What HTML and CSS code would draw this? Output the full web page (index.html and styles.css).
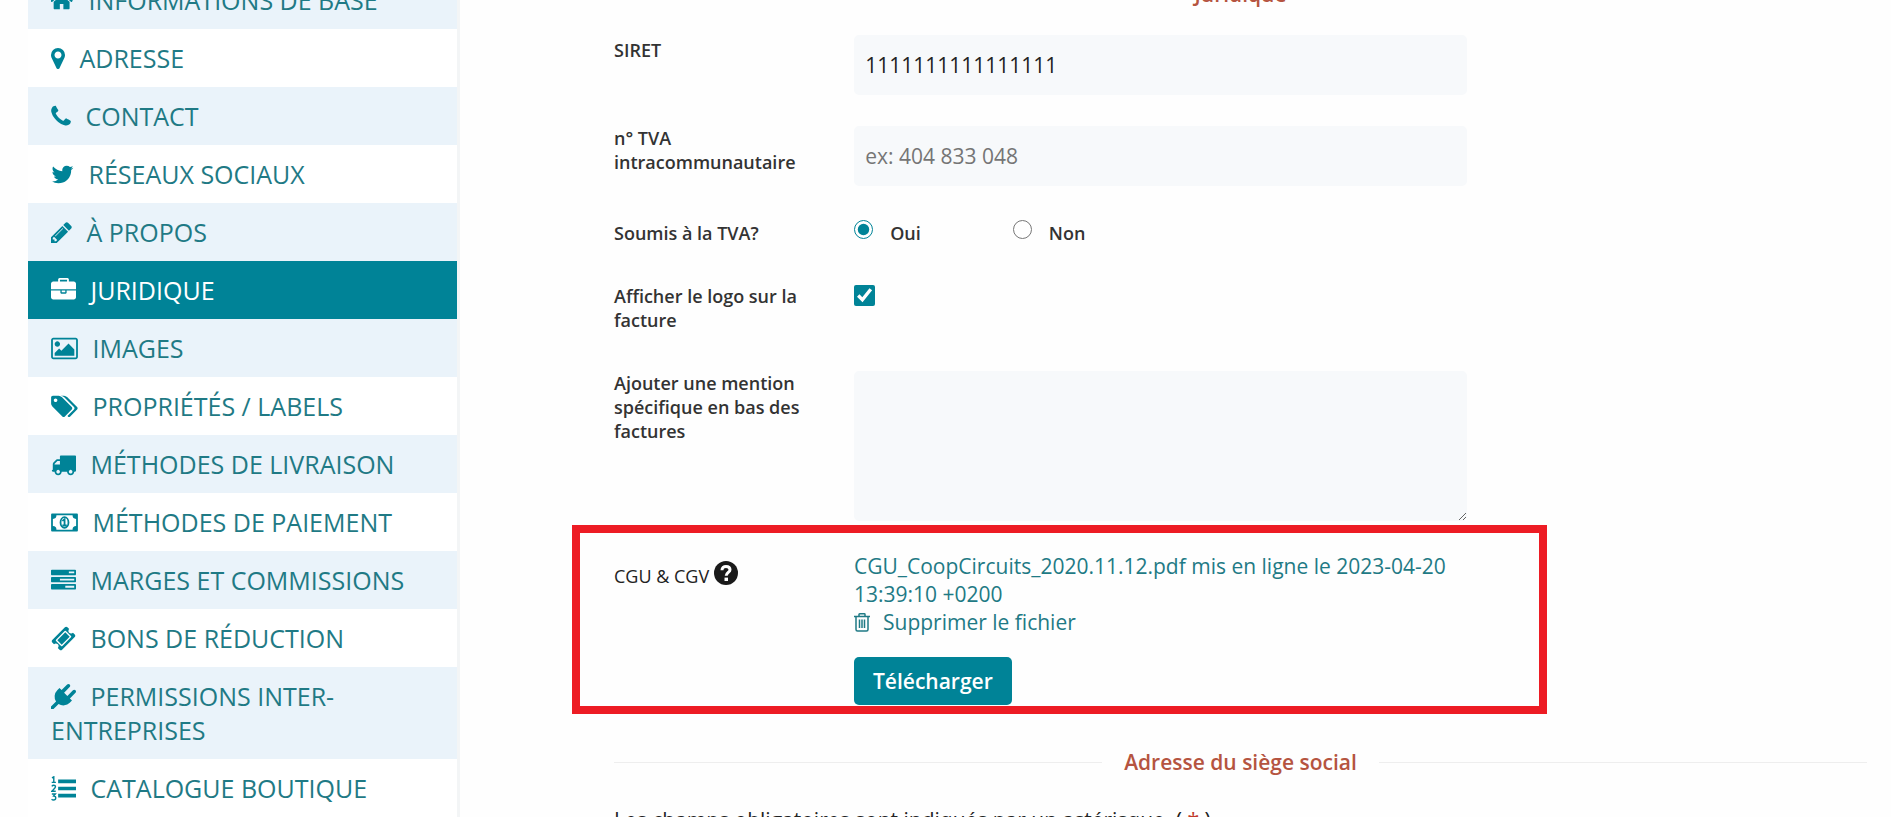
FILE: index.html
```html
<!DOCTYPE html>
<html lang="fr">
<head>
<meta charset="utf-8">
<title>Juridique</title>
<link rel="stylesheet" href="styles.css">
</head>
<body>
<div class="page">
  <nav class="side-menu" aria-label="Réglages">
    <a class="menu-item" href="#"><svg class="icon icon-l" viewBox="64 0 1664 1792"><path d="M1408 992v480q0 26-19 45t-45 19h-384v-384h-256v384h-384q-26 0-45-19t-19-45v-480q0-1 .5-3t.5-3l575-474 575 474q1 2 1 6zm223-69l-62 74q-8 9-21 11h-3q-13 0-21-7l-692-577-692 577q-12 8-24 7-13-2-21-11l-62-74q-8-10-7-23.5t11-21.5l719-599q32-26 76-26t76 26l244 204v-195q0-14 9-23t23-9h192q14 0 23 9t9 23v408l219 182q10 8 11 21.5t-7 23.5z"/></svg> INFORMATIONS DE BASE</a>
    <a class="menu-item" href="#"><svg class="icon icon-xs" viewBox="384 0 1024 1792"><path d="M1152 640q0-106-75-181t-181-75-181 75-75 181 75 181 181 75 181-75 75-181zm256 0q0 109-33 179l-364 774q-16 33-47.5 52t-67.5 19-67.5-19-46.5-52l-365-774q-33-70-33-179 0-212 150-362t362-150 362 150 150 362z"/></svg> ADRESSE</a>
    <a class="menu-item" href="#"><svg class="icon icon-s" viewBox="192 0 1408 1792"><path d="M1600 1240q0 27-10 70.5t-21 68.5q-21 50-122 106-94 51-186 51-27 0-53-3.5t-57.5-12.5-47-14.5-55.5-20.5-49-18q-98-35-175-83-127-79-264-216t-216-264q-48-77-83-175-3-9-18-49t-20.5-55.5-14.5-47-12.5-57.5-3.5-53q0-92 51-186 56-101 106-122 25-11 68.5-21t70.5-10q14 0 21 3 18 6 53 76 11 19 30 54t35 63.5 31 53.5q3 4 17.5 25t21.5 35.5 7 28.5q0 20-28.5 50t-62 55-62 53-28.5 46q0 9 5 22.5t8.5 20.5 14 24 11.5 19q76 137 174 235t235 174q2 1 19 11.5t24 14 20.5 8.5 22.5 5q18 0 46-28.5t53-62 55-62 50-28.5q14 0 28.5 7t35.5 21.5 25 17.5q25 15 53.5 31t63.5 35 54 30q70 35 76 53 3 7 3 21z"/></svg> CONTACT</a>
    <a class="menu-item" href="#"><svg class="icon icon-l" viewBox="64 0 1664 1792"><path d="M1684 408q-67 98-162 167 1 14 1 42 0 130-38 259.5t-115.5 248.5-184.5 210.5-258 146-323 54.5q-271 0-496-145 35 4 78 4 225 0 401-138-105-2-188-64.5t-114-159.5q33 5 61 5 43 0 85-11-112-23-185.5-111.5t-73.5-205.5v-4q68 38 146 41-66-44-105-115t-39-154q0-88 44-163 121 149 294.5 238.5t371.5 99.5q-8-38-8-74 0-134 94.5-228.5t228.5-94.5q140 0 236 102 109-21 205-78-37 115-142 178 93-10 186-50z"/></svg> RÉSEAUX SOCIAUX</a>
    <a class="menu-item" href="#"><svg class="icon icon-m" viewBox="128 0 1536 1792"><path d="M491 1536l91-91-235-235-91 91v107h128v128h107zm523-928q0-22-22-22-10 0-17 7l-542 542q-7 7-7 17 0 22 22 22 10 0 17-7l542-542q7-7 7-17zm-54-192l416 416-832 832h-416v-416zm683 96q0 53-37 90l-166 166-416-416 166-165q36-38 90-38 53 0 91 38l235 234q37 39 37 91z"/></svg> À PROPOS</a>
    <a class="menu-item menu-item-active" href="#" aria-current="page"><svg class="icon icon-xl" viewBox="0 0 1792 1792"><path d="M640 256h512v-128h-512v128zm1152 640v480q0 66-47 113t-113 47h-1472q-66 0-113-47t-47-113v-480h672v160q0 26 19 45t45 19h320q26 0 45-19t19-45v-160h672zm-768 0v128h-256v-128h256zm768-480v384h-1792v-384q0-66 47-113t113-47h352v-160q0-40 28-68t68-28h576q40 0 68 28t28 68v160h352q66 0 113 47t47 113z"/></svg> JURIDIQUE</a>
    <a class="menu-item" href="#"><svg class="icon icon-xxl" viewBox="-64 0 1920 1792"><path d="M576 576q0 80-56 136t-136 56-136-56-56-136 56-136 136-56 136 56 56 136zm1024 384v448h-1408v-192l320-320 160 160 512-512zm96-704h-1600q-13 0-22.5 9.5t-9.5 22.5v1216q0 13 9.5 22.5t22.5 9.5h1600q13 0 22.5-9.5t9.5-22.5v-1216q0-13-9.5-22.5t-22.5-9.5zm160 32v1216q0 66-47 113t-113 47h-1600q-66 0-113-47t-47-113v-1216q0-66 47-113t113-47h1600q66 0 113 47t47 113z"/></svg> IMAGES</a>
    <a class="menu-item" href="#"><svg class="icon icon-xxl" viewBox="-64 0 1920 1792"><path d="M384 448q0-53-37.5-90.5t-90.5-37.5-90.5 37.5-37.5 90.5 37.5 90.5 90.5 37.5 90.5-37.5 37.5-90.5zm1067 576q0 53-37 90l-491 492q-39 37-91 37-53 0-90-37l-715-716q-38-37-64.5-101t-26.5-117v-416q0-52 38-90t90-38h416q53 0 117 26.5t102 64.5l715 714q37 39 37 91zm384 0q0 53-37 90l-491 492q-39 37-91 37-36 0-59-14t-53-45l470-470q37-37 37-90 0-52-37-91l-715-714q-38-38-102-64.5t-117-26.5h224q53 0 117 26.5t102 64.5l715 714q37 39 37 91z"/></svg> PROPRIÉTÉS / LABELS</a>
    <a class="menu-item" href="#"><svg class="icon icon-xl" viewBox="0 0 1792 1792"><path d="M640 1408q0-52-38-90t-90-38-90 38-38 90 38 90 90 38 90-38 38-90zm-384-512h384v-256h-158q-13 0-22 9l-195 195q-9 9-9 22v30zm1280 512q0-52-38-90t-90-38-90 38-38 90 38 90 90 38 90-38 38-90zm256-1088v1024q0 15-4 26.5t-13.5 18.5-16.5 11.5-23.5 6-22.5 2-25.5 0-22.5-.5q0 106-75 181t-181 75-181-75-75-181h-384q0 106-75 181t-181 75-181-75-75-181h-64q-3 0-22.5.5t-25.5 0-22.5-2-23.5-6-16.5-11.5-13.5-18.5-4-26.5q0-26 19-45t45-19v-320q0-8-.5-35t0-38 2.5-34.5 6.5-37 14-30.5 22.5-30l198-198q19-19 50.5-32t58.5-13h160v-192q0-26 19-45t45-19h1024q26 0 45 19t19 45z"/></svg> MÉTHODES DE LIVRAISON</a>
    <a class="menu-item" href="#"><svg class="icon icon-xxl" viewBox="-64 0 1920 1792"><path fill-rule="evenodd" d="M0 256H1792a64 64 0 0 1 64 64V1472a64 64 0 0 1-64 64H0a64 64 0 0 1-64-64V320a64 64 0 0 1 64-64zM320 384A256 256 0 0 1 64 640V1152A256 256 0 0 1 320 1408H1472A256 256 0 0 1 1728 1152V640A256 256 0 0 1 1472 384z"/><ellipse class="icon-ring" cx="896" cy="896" rx="285" ry="380"/><path class="icon-one" d="M740 780L900 660V1090M740 1110H1060"/></svg> MÉTHODES DE PAIEMENT</a>
    <a class="menu-item" href="#"><svg class="icon icon-xl" viewBox="0 0 1792 1792"><path d="M1024 1408h640v-128h-640v128zm-384-512h1024v-128h-1024v128zm640-512h384v-128h-384v128zm512 832v256q0 26-19 45t-45 19h-1664q-26 0-45-19t-19-45v-256q0-26 19-45t45-19h1664q26 0 45 19t19 45zm0-512v256q0 26-19 45t-45 19h-1664q-26 0-45-19t-19-45v-256q0-26 19-45t45-19h1664q26 0 45 19t19 45zm0-512v256q0 26-19 45t-45 19h-1664q-26 0-45-19t-19-45v-256q0-26 19-45t45-19h1664q26 0 45 19t19 45z"/></svg> MARGES ET COMMISSIONS</a>
    <a class="menu-item" href="#"><svg class="icon icon-xl" viewBox="0 0 1792 1792"><path d="M1024 452l316 316-572 572-316-316zm-211 979l618-618q19-19 19-45t-19-45l-362-362q-18-18-45-18t-45 18l-618 618q-19 19-19 45t19 45l362 362q18 18 45 18t45-18zm889-637l-907 908q-37 37-90.5 37t-90.5-37l-126-126q56-56 56-136t-56-136-136-56-136 56l-125-126q-37-37-37-90.5t37-90.5l907-906q37-37 90.5-37t90.5 37l125 125q-56 56-56 136t56 136 136 56 136-56l126 125q37 37 37 90.5t-37 90.5z"/></svg> BONS DE RÉDUCTION</a>
    <a class="menu-item" href="#"><svg class="icon icon-xl" viewBox="0 0 1792 1792"><path d="M1755 453q37 38 37 90.5t-37 90.5l-401 400 150 150-160 160q-163 163-389.5 186.5t-411.5-100.5l-362 362h-181v-181l362-362q-124-185-100.5-411.5t186.5-389.5l160-160 150 150 400-401q38-37 91-37t90 37 37 90.5-37 90.5l-400 401 234 234 401-400q38-37 91-37t90 37z"/></svg> PERMISSIONS INTER-ENTREPRISES</a>
    <a class="menu-item" href="#"><svg class="icon icon-xl" viewBox="0 0 1792 1792"><path d="M512 256H1792V512H512zM512 768H1792V1024H512zM512 1280H1792V1536H512z"/><path class="icon-marks" d="M70 140L200 60V450M50 460H350M60 740Q110 660 200 660Q320 660 320 760Q320 860 60 1090H340M60 1290H310L190 1430Q340 1440 340 1570Q340 1720 180 1720Q100 1720 40 1670"/></svg> CATALOGUE BOUTIQUE</a>
    <a class="menu-item" href="#"> </a>
  </nav>

  <main class="content">
    <form class="form">
      <h2 class="section-title"><span>Juridique</span></h2>

      <div class="row">
        <label class="label" for="siret">SIRET</label>
        <input class="field" id="siret" type="text" value="1111111111111111">
      </div>
      <div class="row row-tva">
        <label class="label label-wrapped" for="tva">n° TVA intracommunautaire</label>
        <input class="field" id="tva" type="text" placeholder="ex: 404 833 048">
      </div>
      <div class="row row-short" role="radiogroup" aria-labelledby="soumis">
        <span class="label" id="soumis">Soumis à la TVA?</span>
        <div class="radios">
          <label class="radio-option"><input class="radio" type="radio" name="soumis" checked><span>Oui</span></label>
          <label class="radio-option"><input class="radio" type="radio" name="soumis"><span>Non</span></label>
        </div>
      </div>
      <div class="row row-logo">
        <label class="label" for="logo">Afficher le logo sur la facture</label>
        <input class="checkbox" id="logo" type="checkbox" checked>
      </div>
      <div class="row row-mention">
        <label class="label label-wrapped" for="mention">Ajouter une mention spécifique en bas des factures</label>
        <textarea class="field area" id="mention"></textarea>
      </div>

      <div class="highlight">
        <div class="terms-label">CGU &amp; CGV
          <svg class="help" viewBox="0 0 24 24" role="img" aria-label="Aide"><circle cx="12" cy="12" r="12"/><path class="help-mark" d="M8 9.200C8 6.600 9.700 5.400 12 5.400S16 6.700 16 8.800C16 11.400 12.200 11.600 12.200 14.800"/><path class="help-dot" d="M10.500 16.600H14V20H10.500z"/></svg>
        </div>
        <div class="terms">
          <a class="link" href="#">CGU_CoopCircuits_2020.11.12.pdf mis en ligne le 2023-04-20 13:39:10 +0200</a>
          <a class="link link-delete" href="#"><svg class="trash" viewBox="0 0 16 19"><path d="M0 3.500H16M5 3.500V1.500Q5 .8 5.700 .8H10.300Q11 .8 11 1.500V3.500M2 3.500V16.500Q2 18 3.500 18H12.500Q14 18 14 16.500V3.500M5.500 6.500V15M8 6.500V15M10.500 6.500V15"/></svg>Supprimer le fichier</a>
          <button class="button" type="button">Télécharger</button>
        </div>
      </div>

      <h2 class="section-title"><span>Adresse du siège social</span></h2>
      <p class="note">Les champs obligatoires sont indiqués par un astérisque. ( <span class="star">*</span> )</p>
    </form>
  </main>
</div>
</body>
</html>
```

FILE: styles.css
```css
* { box-sizing: border-box; }

html { overflow: hidden; }

body {
  margin: 0;
  height: 100vh;
  overflow: hidden;
  background: #fefefe;
  color: #222;
  font-family: "Open Sans", "Noto Sans", sans-serif;
}

/* The view is scrolled part-way down the settings screen. */
.page {
  display: grid;
  grid-template-columns: 432fr 1407fr;
  margin-top: -29px;
  padding: 0 24px 0 28px;
}

.side-menu { border-right: 3px solid #f3f5f6; }

.menu-item {
  display: block;
  min-height: 58px;
  padding: 12px 23px;
  background: #fff;
  color: #1f7a85;
  font-size: 25px;
  line-height: 34px;
  text-decoration: none;
}
.menu-item:nth-child(odd) { background: #eaf3fa; }
.menu-item.menu-item-active { background: #008397; color: #fff; }

.icon {
  height: 25px;
  margin-right: 8px;
  vertical-align: -3px;
  fill: #008397;
}
.menu-item-active .icon { fill: #fff; }
.icon-xs { width: 14px; }
.icon-s { width: 20px; }
.icon-m { width: 21px; }
.icon-l { width: 23px; }
.icon-xl { width: 25px; }
.icon-xxl { width: 27px; }
.icon-ring { fill: none; stroke: #008397; stroke-width: 130; }
.icon-one { fill: none; stroke: #008397; stroke-width: 130; }
.icon-marks { fill: none; stroke: #008397; stroke-width: 100; }

.content { padding: 9px 0 0 154px; }

.form { display: flex; flex-direction: column; }

.section-title {
  display: flex;
  align-items: center;
  gap: 22px;
  margin: 0 0 27px;
  color: #b55440;
  font-size: 21px;
  font-weight: 600;
  line-height: 28px;
}
.section-title::before,
.section-title::after {
  content: "";
  flex: 1;
  height: 1px;
  background: #eee;
}

.row {
  display: grid;
  grid-template-columns: 240fr 612fr 400fr;
  align-items: start;
  min-height: 60px;
  margin-bottom: 31px;
}
.row-tva { margin-bottom: 32px; }
.row-short { min-height: 32px; }
.row-logo { min-height: 59px; }
.row-mention { margin-bottom: 4px; }

.label {
  padding: 3px 48px 0 0;
  color: #333;
  font-size: 18px;
  font-weight: 600;
  line-height: 24px;
}
.label-wrapped { padding-top: 0; }

.field {
  width: 100%;
  height: 60px;
  padding: 0 11px;
  border: 0;
  border-radius: 5px;
  background: #f7f9fb;
  color: #222;
  font: 400 21px/28px "Open Sans", "Noto Sans", sans-serif;
}
.field::placeholder { color: #757575; opacity: 1; }
.area {
  display: block;
  height: 150px;
  padding: 12px;
  resize: vertical;
}

.radios { display: flex; gap: 92px; }
.radio-option {
  display: flex;
  gap: 17px;
  color: #333;
  font-size: 18px;
  font-weight: 600;
  line-height: 24px;
}
.radio-option span { padding-top: 3px; }
.radio {
  width: 19px;
  height: 19px;
  margin: 2px 0 0;
  accent-color: #008397;
}
.checkbox {
  width: 21px;
  height: 21px;
  margin: 4px 0 0;
  accent-color: #008397;
}

.highlight {
  display: grid;
  grid-template-columns: 240px 1fr;
  margin: 0 320px 34px -42px;
  padding: 19px 74px 1px 34px;
  border: 8px solid #ed1c24;
}

.terms-label {
  padding-top: 9px;
  font-size: 18px;
  line-height: 28px;
}
.help { width: 24px; height: 24px; fill: #1a1a1a; vertical-align: -2px; }
.help-mark { fill: none; stroke: #fff; stroke-width: 3; }
.help-dot { fill: #fff; }

.terms { display: flex; flex-direction: column; align-items: flex-start; }
.link {
  color: #1f7a85;
  font-size: 21px;
  line-height: 28px;
  text-decoration: none;
}
.link-delete { display: flex; align-items: center; gap: 13px; }
.trash { width: 16px; height: 19px; fill: none; stroke: #1f7a85; stroke-width: 1.5; }

.button {
  height: 48px;
  margin-top: 21px;
  padding: 0 19px;
  border: 0;
  border-radius: 5px;
  background: #008397;
  color: #fff;
  font: 600 21px/28px "Open Sans", "Noto Sans", sans-serif;
}

.note { margin: 1px 0 0; font-size: 21px; line-height: 32px; white-space: nowrap; }
.star { color: #c0392b; }
```
